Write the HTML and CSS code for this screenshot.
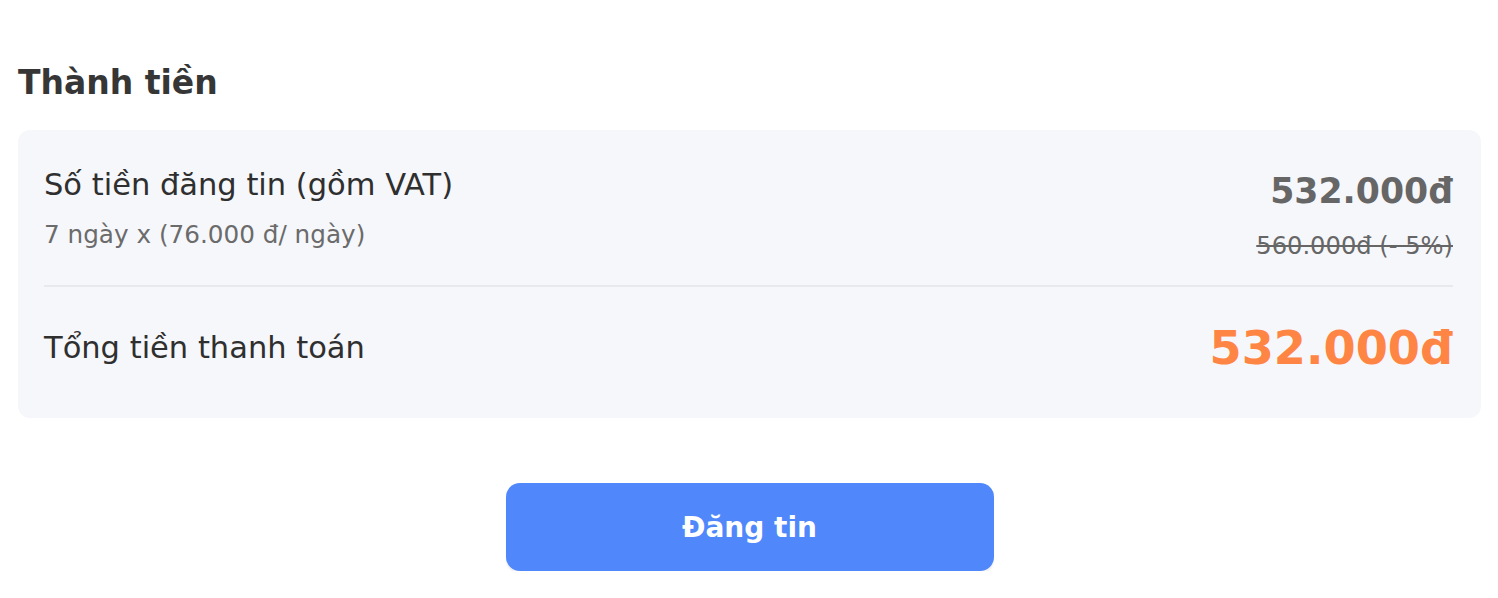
FILE: index.html
```html
<!DOCTYPE html>
<html lang="vi">
<head>
  <meta charset="UTF-8" />
  <title>Thành tiền</title>
  <link rel="stylesheet" href="styles.css">
</head>
<body>
  <div class="page">
    <h2 class="title">Thành tiền</h2>

    <div class="summary">
      <div class="row">
        <div class="left">
          <div class="label">Số tiền đăng tin (gồm VAT)</div>
          <div class="sub">7 ngày x (76.000 đ/ ngày)</div>
        </div>
        <div class="right">
          <div class="price">532.000đ</div>
          <div class="old-price">560.000đ (- 5%)</div>
        </div>
      </div>
      <div class="row total">
        <div class="label">Tổng tiền thanh toán</div>
        <div class="total-price">532.000đ</div>
      </div>
    </div>

    <div class="actions">
      <button class="submit">Đăng tin</button>
    </div>
  </div>
</body>
</html>
```

FILE: styles.css
```css
body {
  margin: 0;
  font-family: "DejaVu Sans", sans-serif;
  background: #fff;
  color: #2f2f2f;
}
.page {
  padding: 63px 17px 0 18px;
}
.title {
  margin: 0 0 27px;
  font-size: 33px;
  line-height: 40px;
  font-weight: bold;
  color: #363636;
}
.summary {
  background: #f6f7fb;
  border-radius: 12px;
  padding: 0 28px 0 26px;
}
.row {
  display: flex;
  justify-content: space-between;
}
.row:first-child {
  padding: 37px 0 24px;
  border-bottom: 2px solid #e8e9ed;
}
.label {
  font-size: 30.5px;
  line-height: 36px;
  color: #2f2f2f;
}
.sub {
  margin-top: 17px;
  font-size: 24.7px;
  line-height: 30px;
  color: #6b6b6b;
}
.right {
  margin-top: 4px;
  text-align: right;
}
.price {
  font-size: 34.7px;
  line-height: 40px;
  font-weight: bold;
  color: #666;
}
.old-price {
  margin-top: 20px;
  font-size: 24.2px;
  line-height: 30px;
  color: #666;
  text-decoration: line-through;
}
.row.total {
  align-items: center;
  padding: 34px 0 43px;
}
.total-price {
  font-size: 46.2px;
  line-height: 54px;
  font-weight: bold;
  color: #ff8544;
}
.actions {
  display: flex;
  justify-content: center;
  margin-top: 65px;
}
.submit {
  width: 488px;
  height: 88px;
  border: none;
  border-radius: 14px;
  background: #5088fc;
  color: #fff;
  font-family: "DejaVu Sans", sans-serif;
  font-size: 28px;
  font-weight: bold;
  box-shadow: 0 3px 2px rgba(0, 0, 0, 0.06);
  cursor: pointer;
}
```
